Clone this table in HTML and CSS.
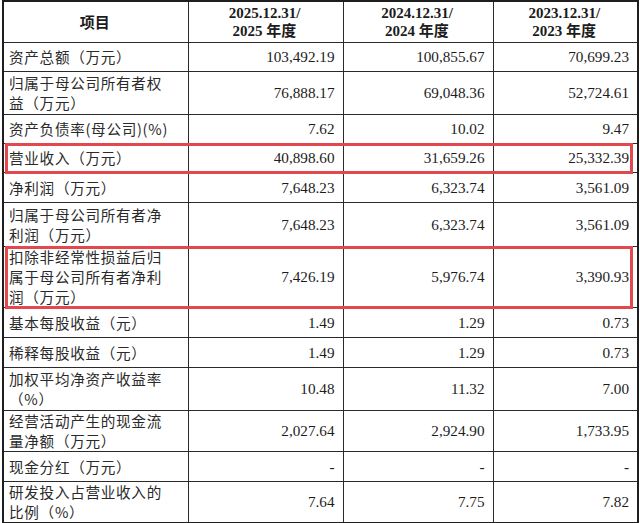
FILE: index.html
```html
<!DOCTYPE html>
<html lang="zh-CN">
<head>
<meta charset="utf-8">
<link rel="stylesheet" href="styles.css">
</head>
<body>
<table class="fin">
  <colgroup>
    <col class="c1"><col class="c2"><col class="c3"><col class="c4">
  </colgroup>
  <thead>
    <tr class="h42">
      <th class="item">项目</th>
      <th>2025.12.31/<br>2025 年度</th>
      <th>2024.12.31/<br>2024 年度</th>
      <th>2023.12.31/<br>2023 年度</th>
    </tr>
  </thead>
  <tbody>
    <tr class="h29"><td class="label">资产总额（万元）</td><td>103,492.19</td><td>100,855.67</td><td>70,699.23</td></tr>
    <tr class="h43"><td class="label">归属于母公司所有者权<br>益（万元）</td><td>76,888.17</td><td>69,048.36</td><td>52,724.61</td></tr>
    <tr class="h29"><td class="label">资产负债率(母公司)(%)</td><td>7.62</td><td>10.02</td><td>9.47</td></tr>
    <tr class="h29"><td class="label mark">营业收入（万元）</td><td>40,898.60</td><td>31,659.26</td><td>25,332.39</td></tr>
    <tr class="h30"><td class="label">净利润（万元）</td><td>7,648.23</td><td>6,323.74</td><td>3,561.09</td></tr>
    <tr class="h44"><td class="label">归属于母公司所有者净<br>利润（万元）</td><td>7,648.23</td><td>6,323.74</td><td>3,561.09</td></tr>
    <tr class="h60"><td class="label mark">扣除非经常性损益后归<br>属于母公司所有者净利<br>润（万元）</td><td>7,426.19</td><td>5,976.74</td><td>3,390.93</td></tr>
    <tr class="h30"><td class="label">基本每股收益（元）</td><td>1.49</td><td>1.29</td><td>0.73</td></tr>
    <tr class="h30"><td class="label">稀释每股收益（元）</td><td>1.49</td><td>1.29</td><td>0.73</td></tr>
    <tr class="h43"><td class="label">加权平均净资产收益率<br>（%）</td><td>10.48</td><td>11.32</td><td>7.00</td></tr>
    <tr class="h41"><td class="label">经营活动产生的现金流<br>量净额（万元）</td><td>2,027.64</td><td>2,924.90</td><td>1,733.95</td></tr>
    <tr class="h30"><td class="label">现金分红（万元）</td><td>-</td><td>-</td><td>-</td></tr>
    <tr class="h39"><td class="label">研发投入占营业收入的<br>比例（%）</td><td>7.64</td><td>7.75</td><td>7.82</td></tr>
  </tbody>
</table>
</body>
</html>
```

FILE: styles.css
```css
html, body {
  margin: 0;
  padding: 0;
  background: #ffffff;
}

body {
  width: 640px;
  height: 523px;
  overflow: hidden;
}

.fin {
  margin: 0 0 0 2px;
  width: 635px;
  table-layout: fixed;
  border-collapse: collapse;
  border: 2px solid #1e1e1e;
  font-family: "Liberation Serif", "Noto Sans CJK SC", serif;
  font-size: 15px;
  color: #1c1c1c;
}

.c1 { width: 185px; }
.c2 { width: 155px; }
.c3 { width: 150px; }
.c4 { width: 145px; }

.fin th,
.fin td {
  border: 1px solid #2a2a2a;
  padding: 0 8px 0 6px;
  vertical-align: middle;
  line-height: 20px;
}

.fin th {
  font-weight: bold;
  text-align: center;
  line-height: 18px;
}

.fin th.item {
  font-family: "Noto Sans CJK SC", sans-serif;
  font-size: 15px;
}

.fin td {
  text-align: right;
  font-size: 15.2px;
}

.fin td.label {
  text-align: left;
  font-family: "Noto Sans CJK SC", sans-serif;
  font-weight: 400;
  font-size: 14.6px;
  letter-spacing: 0.7px;
  padding-left: 5px;
  color: #2a2a2a;
}

.h42 th { height: 40px; }
.h29 td { height: 28px; }
.h30 td { height: 29px; }
.h39 td { height: 38px; }
.h41 td { height: 40px; }
.h43 td { height: 42px; }
.h44 td { height: 43px; }
.h60 td { height: 59px; }

.fin td.mark {
  position: relative;
}

.fin td.mark::after {
  content: "";
  position: absolute;
  left: 1px;
  top: -1px;
  bottom: -2px;
  width: 628px;
  border: 3px solid #e2484e;
  box-sizing: border-box;
  pointer-events: none;
}
```
